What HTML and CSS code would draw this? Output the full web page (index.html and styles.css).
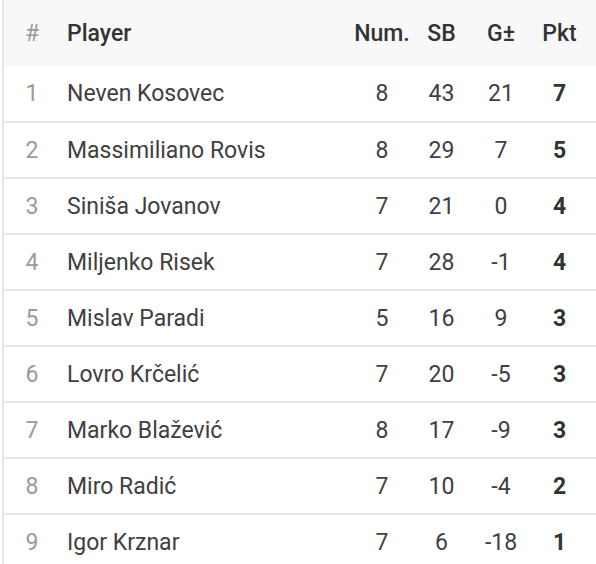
FILE: index.html
```html
<!DOCTYPE html>
<html>
<head>
<meta charset="utf-8">
<link rel="stylesheet" href="styles.css">
</head>
<body>
<div class="wrap">
<table class="standings">
  <colgroup>
    <col class="c-rank"><col class="c-player"><col class="c-num"><col class="c-sb"><col class="c-gd"><col class="c-pts">
  </colgroup>
  <thead>
    <tr><th class="rank">#</th><th class="player">Player</th><th>Num.</th><th>SB</th><th>G±</th><th>Pkt</th></tr>
  </thead>
  <tbody>
    <tr><td class="rank">1</td><td class="player">Neven Kosovec</td><td>8</td><td>43</td><td>21</td><td class="pts">7</td></tr>
    <tr><td class="rank">2</td><td class="player">Massimiliano Rovis</td><td>8</td><td>29</td><td>7</td><td class="pts">5</td></tr>
    <tr><td class="rank">3</td><td class="player">Siniša Jovanov</td><td>7</td><td>21</td><td>0</td><td class="pts">4</td></tr>
    <tr><td class="rank">4</td><td class="player">Miljenko Risek</td><td>7</td><td>28</td><td>-1</td><td class="pts">4</td></tr>
    <tr><td class="rank">5</td><td class="player">Mislav Paradi</td><td>5</td><td>16</td><td>9</td><td class="pts">3</td></tr>
    <tr><td class="rank">6</td><td class="player">Lovro Krčelić</td><td>7</td><td>20</td><td>-5</td><td class="pts">3</td></tr>
    <tr><td class="rank">7</td><td class="player">Marko Blažević</td><td>8</td><td>17</td><td>-9</td><td class="pts">3</td></tr>
    <tr><td class="rank">8</td><td class="player">Miro Radić</td><td>7</td><td>10</td><td>-4</td><td class="pts">2</td></tr>
    <tr><td class="rank">9</td><td class="player">Igor Krznar</td><td>7</td><td>6</td><td>-18</td><td class="pts">1</td></tr>
  </tbody>
</table>
</div>
</body>
</html>
```
FILE: styles.css
```css
html, body {
  margin: 0;
  padding: 0;
  background: #ffffff;
}
.wrap {
  margin-left: 2px;
  border-left: 2px solid #e6e6e6;
  width: 592px;
}
.standings {
  border-collapse: collapse;
  table-layout: fixed;
  width: 592px;
  font-family: Roboto, "Liberation Sans", sans-serif;
  font-size: 23px;
  color: #404040;
}
.c-rank { width: 56px; }
.c-player { width: 290px; }
.c-num { width: 64px; }
.c-sb { width: 55px; }
.c-gd { width: 64px; }
.c-pts { width: 63px; }
.standings th,
.standings td {
  padding: 0;
  text-align: center;
  white-space: nowrap;
}
.standings thead tr {
  background: #f8f8f9;
  height: 66px;
}
.standings th {
  font-weight: 500;
  color: #333333;
}
.standings th.rank {
  font-weight: 400;
  color: #9a9a9a;
}
.standings th:last-child,
.standings td:last-child {
  padding-right: 10px;
}
.standings tbody tr {
  height: 56px;
  border-bottom: 2px solid #e6e6e6;
}
.standings .player {
  text-align: left;
  padding-left: 7px;
}
.standings td.rank {
  color: #9a9a9a;
}
.standings td.pts {
  font-weight: 700;
  color: #333333;
}
```
